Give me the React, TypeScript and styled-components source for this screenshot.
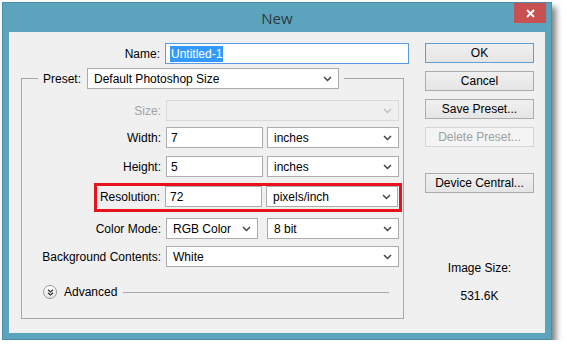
import React from 'react';
import styled, { createGlobalStyle } from 'styled-components';

const GlobalStyle = createGlobalStyle`
  body {
    margin: 0;
    background: #ffffff;
    font-family: 'Liberation Sans', Arial, sans-serif;
    font-size: 12px;
    color: #000000;
  }
`;

const Page = styled.div`
  padding: 2px 0 0 2px;
`;

const Window = styled.div`
  box-sizing: border-box;
  width: 550px;
  height: 338px;
  display: flex;
  flex-direction: column;
  background: #5ca4be;
  border: 1px solid #4a8ea8;
  box-shadow: 4px 5px 6px rgba(0, 0, 0, 0.5);
`;

const TitleBar = styled.div`
  height: 29px;
  display: grid;
  grid-template-columns: 1fr auto 1fr;
  align-items: start;
`;

const Title = styled.div`
  grid-column: 2;
  padding-top: 5px;
  font-family: 'Open Sans', 'Noto Sans', sans-serif;
  font-size: 15px;
  color: #2c3a40;
`;

const CloseButton = styled.div`
  grid-column: 3;
  justify-self: end;
  margin-right: 5px;
  width: 32px;
  height: 20px;
  display: flex;
  align-items: center;
  justify-content: center;
  background: #c75050;

  svg {
    width: 9px;
    height: 9px;
  }
`;

const Client = styled.div`
  flex: 1;
  margin: 0 6px 6px 6px;
  background: #f0f0f0;
  display: flex;
  padding-top: 11px;
  box-sizing: border-box;
`;

const LeftColumn = styled.div`
  box-sizing: border-box;
  width: 400px;
  padding-left: 12px;
  display: flex;
  flex-direction: column;
`;

const RightColumn = styled.div`
  margin-left: 16px;
  width: 109px;
  display: flex;
  flex-direction: column;
  align-items: stretch;
`;

const Row = styled.div<{ $mt?: number }>`
  display: flex;
  align-items: center;
  height: 21px;
  margin-top: ${props => props.$mt ?? 0}px;
`;

const Label = styled.div<{ $width?: number; $disabled?: boolean }>`
  width: ${props => props.$width ?? 139}px;
  text-align: right;
  white-space: nowrap;
  color: ${props => (props.$disabled ? '#a3a3a3' : '#000')};
  margin-right: 5px;
`;

const TextBox = styled.div<{ $width: number; $focused?: boolean }>`
  box-sizing: border-box;
  width: ${props => props.$width}px;
  height: 21px;
  background: #ffffff;
  border: 1px solid ${props => (props.$focused ? '#569de5' : '#abadb3')};
  padding-left: 4px;
  display: flex;
  align-items: center;
  white-space: nowrap;
`;

const Selected = styled.span`
  background: #3399ff;
  color: #ffffff;
  padding: 1px 1px;
`;

const SelectBox = styled.div<{ $width: number; $disabled?: boolean; $gap?: number }>`
  box-sizing: border-box;
  width: ${props => props.$width}px;
  height: 21px;
  margin-left: ${props => props.$gap ?? 0}px;
  background: ${props => (props.$disabled ? '#efefef' : '#ffffff')};
  border: 1px solid ${props => (props.$disabled ? '#d9d9d9' : '#acacac')};
  padding: 0 6px 0 6px;
  display: flex;
  align-items: center;
  justify-content: space-between;
  white-space: nowrap;

  svg {
    width: 9px;
    height: 6px;
    flex-shrink: 0;
  }
`;

const Group = styled.fieldset`
  box-sizing: border-box;
  width: 383px;
  margin: 4px 0 0 0;
  padding: 11px 0 18px 0;
  border: 1px solid #a8a8a8;
  display: flex;
  flex-direction: column;
  min-width: 0;
`;

const Legend = styled.legend`
  margin-left: 16px;
  padding: 0 5px;
  display: flex;
  align-items: center;
  gap: 6px;
`;

const Highlight = styled.div<{ $mt?: number }>`
  display: flex;
  align-items: flex-start;
  margin: ${props => props.$mt ?? 0}px 0 0 72px;
  width: 308px;
  box-sizing: border-box;
  border: 3px solid #e8121a;
  padding: 0 1px 2px 0;
`;

const AdvancedRow = styled.div`
  display: flex;
  align-items: center;
  height: 16px;
  margin-top: 17px;
  padding-left: 21px;
  padding-right: 14px;
`;

const AdvancedToggle = styled.div`
  box-sizing: border-box;
  width: 14px;
  height: 14px;
  border-radius: 50%;
  border: 1px solid #9a9a9a;
  background: linear-gradient(#ffffff, #e4e4e4);
  display: flex;
  align-items: center;
  justify-content: center;

  svg {
    width: 7px;
    height: 7px;
  }
`;

const AdvancedLabel = styled.div`
  margin-left: 7px;
`;

const Rule = styled.div`
  flex: 1;
  height: 1px;
  margin-left: 6px;
  background: #a8a8a8;
`;

const Button = styled.div<{ $variant?: 'default' | 'disabled'; $gap?: number }>`
  box-sizing: border-box;
  height: 20px;
  margin-top: ${props => props.$gap ?? 0}px;
  display: flex;
  align-items: center;
  justify-content: center;
  background: ${props => (props.$variant === 'disabled' ? '#f4f4f4' : 'linear-gradient(#f0f0f0, #e5e5e5)')};
  border: 1px solid
    ${props => (props.$variant === 'default' ? '#5b9fd8' : props.$variant === 'disabled' ? '#d5d5d5' : '#acacac')};
  color: ${props => (props.$variant === 'disabled' ? '#a0a0a0' : '#000')};
  white-space: nowrap;
`;

const InfoText = styled.div<{ $gap: number }>`
  margin-top: ${props => props.$gap}px;
  text-align: center;
`;

const Chevron: React.FC<{ color?: string }> = ({ color = '#444' }) => (
  <svg viewBox="0 0 9 6">
    <polyline points="1,1 4.5,4.5 8,1" fill="none" stroke={color} strokeWidth="1.5" />
  </svg>
);

const Select: React.FC<{ width: number; value?: string; disabled?: boolean; gap?: number }> = ({
  width,
  value,
  disabled,
  gap,
}) => (
  <SelectBox $width={width} $disabled={disabled} $gap={gap}>
    <span>{value}</span>
    <Chevron color={disabled ? '#c0c0c0' : '#444'} />
  </SelectBox>
);

export default function App() {
  return (
    <Page>
      <GlobalStyle />
      <Window>
        <TitleBar>
          <Title>New</Title>
          <CloseButton>
            <svg viewBox="0 0 9 9">
              <path d="M1 1 L8 8 M8 1 L1 8" stroke="#fff" strokeWidth="1.8" />
            </svg>
          </CloseButton>
        </TitleBar>
        <Client>
          <LeftColumn>
            <Row>
              <Label>Name:</Label>
              <TextBox $width={244} $focused>
                <Selected>Untitled-1</Selected>
              </TextBox>
            </Row>

            <Group>
              <Legend>
                <span>Preset:</span>
                <Select width={252} value="Default Photoshop Size" />
              </Legend>

              <Row>
                <Label $disabled>Size:</Label>
                <Select width={233} disabled />
              </Row>
              <Row $mt={6}>
                <Label>Width:</Label>
                <TextBox $width={97}>7</TextBox>
                <Select width={132} value="inches" gap={4} />
              </Row>
              <Row $mt={8}>
                <Label>Height:</Label>
                <TextBox $width={97}>5</TextBox>
                <Select width={132} value="inches" gap={4} />
              </Row>
              <Highlight $mt={6}>
                <Row>
                  <Label $width={63}>Resolution:</Label>
                  <TextBox $width={97}>72</TextBox>
                  <Select width={132} value="pixels/inch" gap={4} />
                </Row>
              </Highlight>
              <Row $mt={6}>
                <Label>Color Mode:</Label>
                <Select width={92} value="RGB Color" />
                <Select width={132} value="8 bit" gap={9} />
              </Row>
              <Row $mt={7}>
                <Label>Background Contents:</Label>
                <Select width={233} value="White" />
              </Row>

              <AdvancedRow>
                <AdvancedToggle>
                  <svg viewBox="0 0 7 7">
                    <polyline points="1,0.8 3.5,3 6,0.8" fill="none" stroke="#333" strokeWidth="1.2" />
                    <polyline points="1,3.8 3.5,6 6,3.8" fill="none" stroke="#333" strokeWidth="1.2" />
                  </svg>
                </AdvancedToggle>
                <AdvancedLabel>Advanced</AdvancedLabel>
                <Rule />
              </AdvancedRow>
            </Group>
          </LeftColumn>

          <RightColumn>
            <Button $variant="default">OK</Button>
            <Button $gap={8}>Cancel</Button>
            <Button $gap={8}>Save Preset...</Button>
            <Button $gap={8} $variant="disabled">
              Delete Preset...
            </Button>
            <Button $gap={26}>Device Central...</Button>
            <InfoText $gap={68}>Image Size:</InfoText>
            <InfoText $gap={14}>531.6K</InfoText>
          </RightColumn>
        </Client>
      </Window>
    </Page>
  );
}
